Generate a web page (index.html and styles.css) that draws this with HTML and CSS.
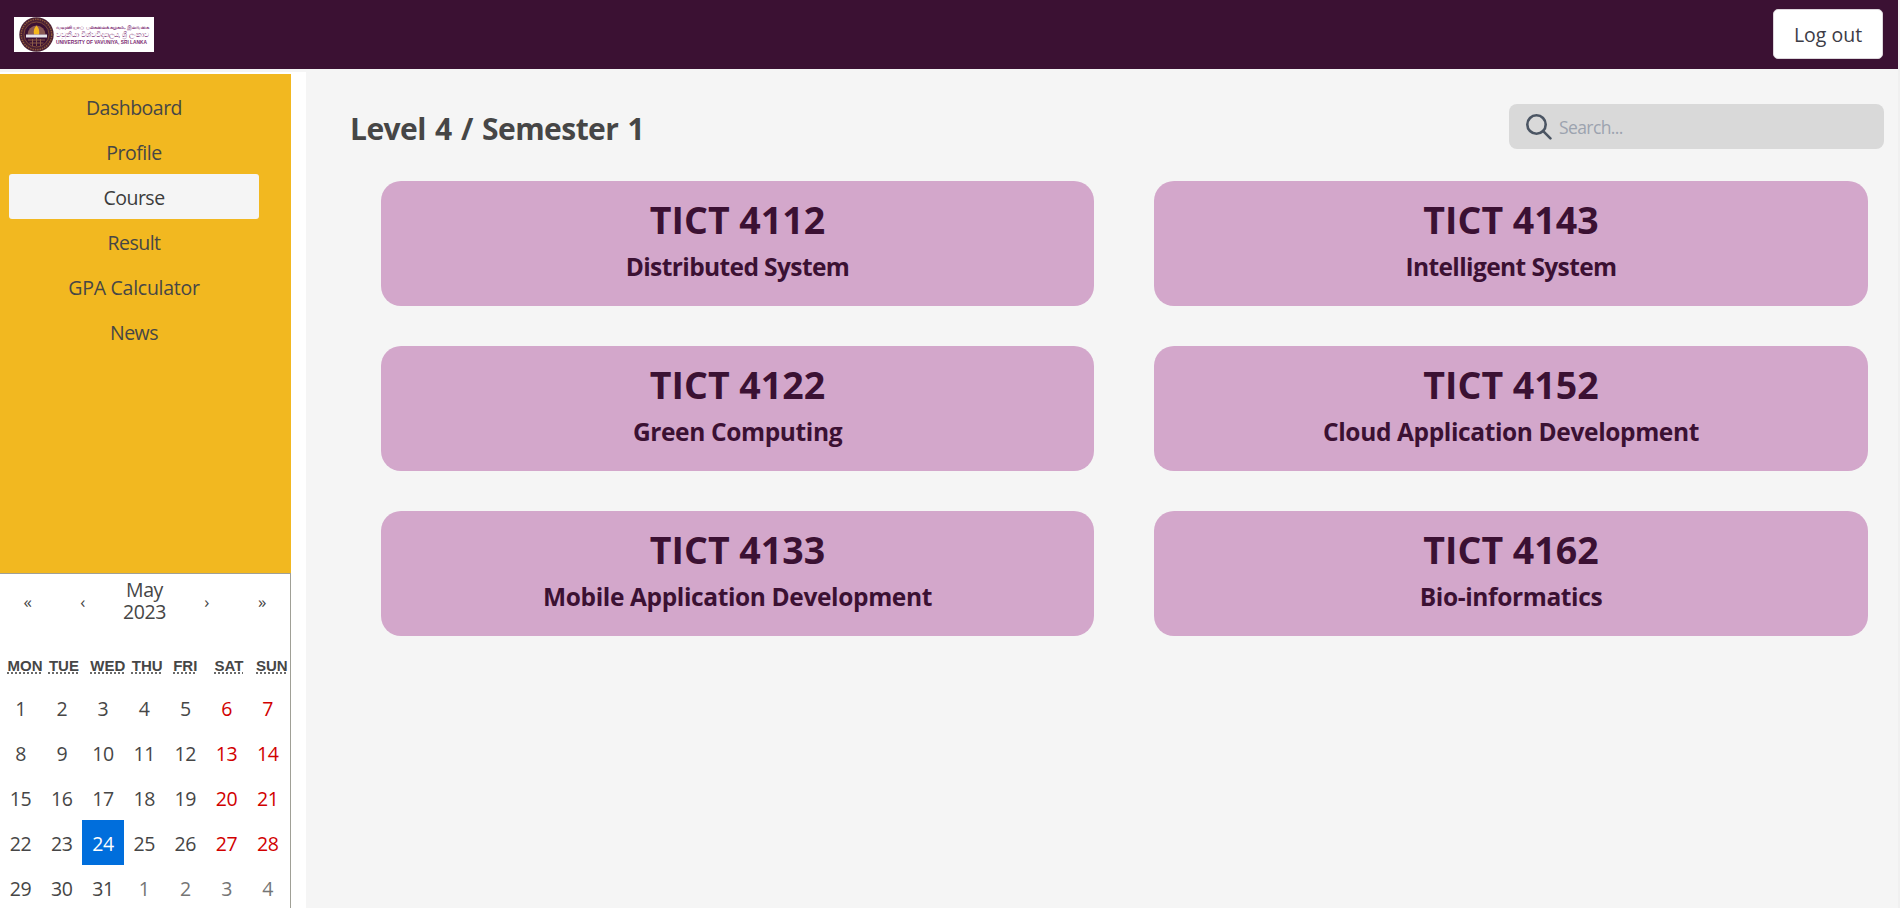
FILE: index.html
```html
<!DOCTYPE html>
<html lang="en">
<head>
<meta charset="utf-8">
<title>Courses</title>
<link rel="stylesheet" href="styles.css">
</head>
<body>
<header class="topbar">
  <svg class="logo" viewBox="0 0 140 35">
    <rect width="140" height="35" fill="#fff"/>
    <circle cx="22.500" cy="17.500" r="17.200" fill="#4a1f33"/>
    <circle cx="22.500" cy="17.500" r="15.200" fill="none" stroke="#8f5c3a" stroke-width="1.500" stroke-dasharray="1.400 1"/>
    <circle cx="22.500" cy="17.500" r="12.500" fill="#3b1133" stroke="#8a5638" stroke-width=".8"/>
    <path d="M13.500 17.500a9 9 0 0 1 18 0z" fill="#8a5a55"/>
    <path d="M22.500 8.500c2.600 2.500 3.200 5.500 2.500 9h-5c-.7-3.500-.1-6.500 2.500-9z" fill="#f5b81c"/>
    <path d="M12 17.500h21v3H12z" fill="#e6e4ea"/>
    <path d="M14 23h17M15.500 26h14M18.500 22v7M22.500 21v8M26.500 22v7" stroke="#8a5a48" stroke-width="1"/>
    <g class="logo-text">
      <text class="ta" x="42" y="11.500" textLength="93" lengthAdjust="spacingAndGlyphs">வவுனியாப் பல்கலைக்கழகம், இலங்கை</text>
      <text class="si" x="42" y="19.500" textLength="93" lengthAdjust="spacingAndGlyphs">වවුනියා විශ්වවිද්‍යාලය, ශ්‍රී ලංකාව</text>
      <text class="en" x="42" y="26.500" textLength="91" lengthAdjust="spacingAndGlyphs">UNIVERSITY OF VAVUNIYA, SRI LANKA</text>
    </g>
  </svg>
  <button class="logout">Log out</button>
</header>
<div class="page">
  <aside class="side">
    <nav class="menu">
      <a>Dashboard</a>
      <a>Profile</a>
      <a class="active">Course</a>
      <a>Result</a>
      <a class="wide">GPA Calculator</a>
      <a>News</a>
    </nav>
    <section class="calendar">
      <div class="cal-nav">
        <span class="arrow">«</span><span class="arrow">‹</span>
        <span class="month">May 2023</span>
        <span class="arrow">›</span><span class="arrow">»</span>
      </div>
      <div class="weekdays">
        <abbr>MON</abbr><abbr>TUE</abbr><abbr>WED</abbr><abbr>THU</abbr><abbr>FRI</abbr><abbr>SAT</abbr><abbr>SUN</abbr>
      </div>
      <div class="days">
        <span>1</span><span>2</span><span>3</span><span>4</span><span>5</span><span class="we">6</span><span class="we">7</span>
        <span>8</span><span>9</span><span>10</span><span>11</span><span>12</span><span class="we">13</span><span class="we">14</span>
        <span>15</span><span>16</span><span>17</span><span>18</span><span>19</span><span class="we">20</span><span class="we">21</span>
        <span>22</span><span>23</span><span class="sel">24</span><span>25</span><span>26</span><span class="we">27</span><span class="we">28</span>
        <span>29</span><span>30</span><span>31</span><span class="out">1</span><span class="out">2</span><span class="out">3</span><span class="out">4</span>
      </div>
    </section>
  </aside>
  <main class="main">
    <div class="head">
      <h1>Level 4 / Semester 1</h1>
      <label class="search">
        <svg class="glass" viewBox="0 0 26 26" fill="none" stroke="#4b5563" stroke-width="2.600" stroke-linecap="round"><circle cx="10.500" cy="10.500" r="9.200"/><path d="M17.200 17.200l7.200 7.200"/></svg>
        <input type="text" placeholder="Search...">
      </label>
    </div>
    <div class="cards">
      <article class="card"><h2>TICT 4112</h2><h3 class="tight">Distributed System</h3></article>
      <article class="card"><h2>TICT 4143</h2><h3 class="tight">Intelligent System</h3></article>
      <article class="card"><h2>TICT 4122</h2><h3>Green Computing</h3></article>
      <article class="card"><h2>TICT 4152</h2><h3>Cloud Application Development</h3></article>
      <article class="card"><h2>TICT 4133</h2><h3>Mobile Application Development</h3></article>
      <article class="card"><h2>TICT 4162</h2><h3>Bio-informatics</h3></article>
    </div>
  </main>
</div>
</body>
</html>
```
FILE: styles.css
```css
* { box-sizing: border-box; margin: 0; padding: 0; }
html, body { height: 908px; overflow: hidden; }
body { background: #f5f5f5; color: #464646; font-family: "Open Sans", "Noto Sans", sans-serif; font-size: 19.500px; display: flex; flex-direction: column; }

.topbar { height: 69px; flex: none; margin-right: 2px; background: #3b1133; display: flex; align-items: center; justify-content: space-between; padding: 0 15px 0 14px; }
.logo { width: 140px; height: 35px; }
.logo-text { fill: #7b2a72; font-family: "Noto Sans", sans-serif; }
.ta { font-size: 5px; font-weight: 700; }
.si { font-size: 7px; }
.en { font: 700 5px "Liberation Sans", Arial, sans-serif; }
.logout { width: 110px; height: 50px; margin-bottom: 1px; background: #fff; border: 1px solid #dcd6db; border-radius: 5px; font: inherit; color: #3c3c46; }

.page { flex: 1; display: flex; min-height: 0; }
.side { width: 306px; flex: none; margin-top: 3px; padding-top: 2px; background: #fff; display: flex; flex-direction: column; overflow: hidden; }
.menu { width: 291px; height: 499px; flex: none; background: #f2b820; padding: 10px 32px 0 9px; display: flex; flex-direction: column; letter-spacing: -.5px; }
.menu a { height: 45px; line-height: 47px; text-align: center; border-radius: 3px; }
.menu .active { background: #f5f5f5; color: #3c3c3c; }
.menu .wide { letter-spacing: -.27px; }

.calendar { width: 291px; flex: 1; min-height: 0; overflow: hidden; border: 1px solid #a0a096; border-width: 1px 1px 0 0; background: #fff; letter-spacing: -.4px; }
.cal-nav { height: 54px; margin-bottom: 19px; display: grid; grid-template-columns: 55px 55px 69px 55px 56px; align-items: center; text-align: center; }
.arrow { font-size: 17px; }
.month { line-height: 22px; width: 60px; justify-self: center; }
.weekdays { display: grid; grid-template-columns: repeat(7, 41.430px); height: 38px; align-items: center; padding: 0 0 2px 7.500px; font: 700 15px "Liberation Sans", Arial, sans-serif; letter-spacing: 0; }
.weekdays abbr { justify-self: start; text-decoration: underline dotted #6a6a6a 2px; text-underline-offset: 2px; text-decoration-skip-ink: none; }
.days { display: grid; grid-template-columns: repeat(7, 41.200px); grid-auto-rows: 45px; line-height: 47px; text-align: center; }
.we { color: #d10000; }
.out { color: #757575; }
.sel { background: #006edc; color: #fff; }

.main { flex: 1; padding: 35px 14px 0 44px; border-right: 2px solid #f0f0f0; }
.head { display: flex; justify-content: space-between; height: 77px; }
h1 { font-size: 30px; line-height: 49px; white-space: nowrap; letter-spacing: -.55px; word-spacing: 2px; }
.search { width: 375px; height: 45px; background: #d9d9d9; border-radius: 8px; display: flex; align-items: center; padding-left: 17px; }
.glass { width: 26px; height: 26px; flex: none; }
.search input { border: 0; background: none; outline: 0; margin-left: 7px; width: 300px; font: 17.500px "Open Sans", sans-serif; letter-spacing: -.6px; }
.search input::placeholder { color: #9ca3af; opacity: 1; }
.cards { display: grid; grid-template-columns: 713px 714px; gap: 40px 60px; padding-left: 31px; }
.card { height: 125px; border-radius: 20px; background: #d3a7cb; color: #3b1133; text-align: center; padding-top: 14px; }
h2 { font-size: 37.500px; line-height: 50px; }
h3 { font-size: 24.500px; line-height: 44px; letter-spacing: -.37px; }
.tight { letter-spacing: -.6px; }
```
